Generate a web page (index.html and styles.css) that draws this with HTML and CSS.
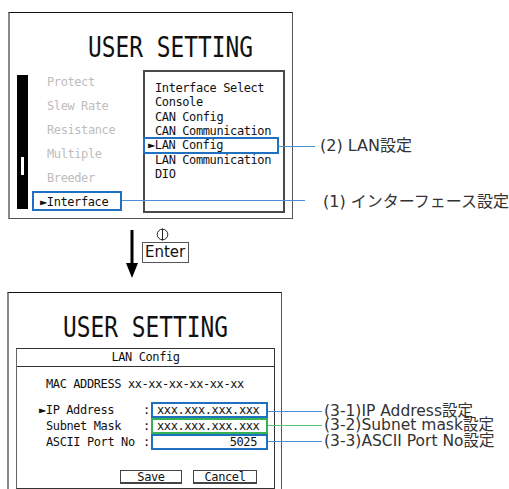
FILE: index.html
```html
<!DOCTYPE html>
<html lang="ja">
<head>
    <meta charset="UTF-8">
    <meta name="viewport" content="width=device-width, initial-scale=1.0">
    <title>USER SETTING - LAN Config</title>
    <link rel="stylesheet" href="styles.css">
</head>
<body>
    <div class="figure">
        <section class="row row-top">
            <div class="screen screen-top">
                <h1 class="title"><span>USER SETTING</span></h1>
                <div class="screen-body">
                    <div class="scrollbar"><div class="thumb"></div></div>
                    <ul class="menu">
                        <li>Protect</li>
                        <li>Slew Rate</li>
                        <li>Resistance</li>
                        <li>Multiple</li>
                        <li>Breeder</li>
                        <li class="active">►Interface</li>
                    </ul>
                    <ul class="submenu">
                        <li>Interface Select</li>
                        <li>Console</li>
                        <li>CAN Config</li>
                        <li>CAN Communication</li>
                        <li class="active">►LAN Config</li>
                        <li>LAN Communication</li>
                        <li>DIO</li>
                    </ul>
                </div>
            </div>
            <div class="callout callout-lan"><i class="lead"></i><span>(2) LAN設定</span></div>
            <div class="callout callout-if"><i class="lead"></i><span>(1) インターフェース設定</span></div>
        </section>

        <div class="enter">
            <svg class="arrow" width="12" height="48" viewBox="0 0 12 48">
                <rect x="4.5" y="0" width="3" height="34" fill="#000"/>
                <polygon points="0,33 12,33 6,48" fill="#000"/>
            </svg>
            <div class="key">
                <div class="key-mark">
                    <svg width="13" height="13" viewBox="0 0 13 13">
                        <circle cx="6.5" cy="6.5" r="5.3" fill="none" stroke="#222" stroke-width="1"/>
                        <line x1="6.5" y1="0.5" x2="6.5" y2="12.5" stroke="#222" stroke-width="1"/>
                    </svg>
                </div>
                <div class="key-box">Enter</div>
            </div>
        </div>

        <section class="row row-bottom">
            <div class="screen screen-bottom">
                <h1 class="title"><span>USER SETTING</span></h1>
                <div class="dialog">
                    <div class="dialog-head">LAN Config</div>
                    <p class="mac">MAC ADDRESS xx-xx-xx-xx-xx-xx</p>
                    <div class="fields">
                        <div class="field-row">
                            <span class="label active">►IP Address</span>
                            <span class="colon">:</span>
                            <span class="field blue">xxx.xxx.xxx.xxx</span>
                        </div>
                        <div class="field-row">
                            <span class="label">Subnet Mask</span>
                            <span class="colon">:</span>
                            <span class="field green">xxx.xxx.xxx.xxx</span>
                        </div>
                        <div class="field-row">
                            <span class="label">ASCII Port No</span>
                            <span class="colon">:</span>
                            <span class="field blue num">5025</span>
                        </div>
                    </div>
                    <div class="buttons">
                        <span class="btn btn-save">Save</span>
                        <span class="btn btn-cancel">Cancel</span>
                    </div>
                </div>
            </div>
            <div class="callout callout-sm callout-ip"><i class="lead"></i><span>(3-1)IP Address設定</span></div>
            <div class="callout callout-sm callout-mask"><i class="lead green-lead"></i><span>(3-2)Subnet mask設定</span></div>
            <div class="callout callout-sm callout-port"><i class="lead"></i><span>(3-3)ASCII Port No設定</span></div>
        </section>
    </div>
</body>
</html>
```

FILE: styles.css
```css
html, body{
    margin: 0;
    overflow: hidden;
    background: #fff;
}
body{
    font-family: "DejaVu Sans", "Noto Sans CJK JP", sans-serif;
    color: #222;
}
.figure{
    padding: 12px 0 0 8px;
}
.row{
    position: relative;
    width: 501px;
}

/* LCD screens */
.screen{
    box-sizing: border-box;
    border: 1px solid #555;
    border-top-color: #111;
    border-left: 2px solid #888;
    font: 12px "DejaVu Sans Mono", monospace;
    letter-spacing: -0.4px;
}
.screen ul{
    list-style: none;
    margin: 0;
}
.screen-top{
    width: 285px;
    height: 207px;
}
.title{
    margin: 0;
    box-sizing: border-box;
    height: 57px;
    padding: 21px 0 0 78px;
    font: normal 27.5px/1 "DejaVu Sans Mono", monospace;
    letter-spacing: 0;
    color: #111;
    white-space: nowrap;
}
.title span{
    display: inline-block;
    transform: scaleX(0.83);
    transform-origin: left center;
}
.screen-body{
    display: flex;
    align-items: flex-start;
}
.scrollbar{
    box-sizing: border-box;
    width: 11px;
    height: 134px;
    margin: 5px 0 0 7px;
    padding: 82px 0 0 4px;
    background: #000;
}
.thumb{
    width: 3px;
    height: 18px;
    background: #fff;
}
.menu{
    width: 90px;
    margin-left: 4px !important;
    padding: 0;
    line-height: 24px;
    color: #bdbdbd;
}
.menu li{
    padding-left: 15px;
    white-space: nowrap;
}
.menu .active{
    box-sizing: border-box;
    height: 20px;
    margin-top: 1px;
    padding: 2px 0 0 8px;
    line-height: 18px;
    color: #111;
    outline: 2px solid #1f70c1;
    outline-offset: -2px;
}
.submenu{
    box-sizing: border-box;
    width: 142px;
    height: 143px;
    margin-left: 21px !important;
    padding: 9px 0 0 10px;
    border: 2px solid #4a4a4a;
    line-height: 14.35px;
    color: #111;
}
.submenu li{
    white-space: nowrap;
}
.submenu .active{
    width: 134px;
    margin-left: -11px;
    padding-left: 4px;
    box-sizing: border-box;
    outline: 2px solid #1f70c1;
    outline-offset: -1px;
}

/* callouts */
.callout{
    position: absolute;
    display: flex;
    align-items: center;
    height: 20px;
    font-size: 16px;
    line-height: 20px;
    color: #333;
    white-space: nowrap;
}
.lead{
    display: block;
    height: 1px;
    background: #4a8fd3;
}
.green-lead{
    background: #5cc47a;
}
.callout-lan{ left: 270px; top: 124px; }
.callout-lan .lead{ width: 37px; }
.callout-lan span{ margin-left: 5px; }
.callout-if{ left: 114px; top: 178px; }
.callout-if .lead{ width: 183px; }
.callout-if span{ margin: 4px 0 0 18px; }

/* enter key */
.enter{
    box-sizing: border-box;
    height: 73px;
    padding: 10px 0 0 118px;
    display: flex;
    align-items: flex-start;
    gap: 4px;
}
.arrow{
    margin-top: 1px;
}
.key{
    width: 47px;
}
.key-mark{
    height: 13px;
    padding-left: 14px;
    margin-top: -1px;
}
.key-mark svg{
    display: block;
}
.key-box{
    margin-top: 1px;
    height: 21px;
    box-sizing: border-box;
    padding: 0 2px;
    border: 1px solid #555;
    font-size: 15px;
    line-height: 19px;
    color: #111;
}

/* bottom screen */
.row-bottom{
    margin-left: -1px;
}
.screen-bottom{
    width: 275px;
    padding-bottom: 12px;
}
.screen-bottom .title{
    height: 55px;
    padding-left: 54px;
}
.dialog{
    box-sizing: border-box;
    width: 259px;
    margin-left: 7px;
    padding-bottom: 4px;
    border: 1px solid #333;
    border-left-color: #666;
    color: #111;
}
.dialog-head{
    height: 17px;
    line-height: 17px;
    text-align: center;
    border-bottom: 1px solid #333;
}
.mac{
    margin: 0;
    padding: 8px 0 0 29px;
    line-height: 18px;
}
.fields{
    margin-top: 9px;
}
.field-row{
    display: flex;
    align-items: center;
    height: 16px;
}
.label{
    box-sizing: border-box;
    width: 126px;
    padding-left: 29px;
    white-space: nowrap;
}
.label.active{
    padding-left: 22px;
}
.colon{
    width: 8px;
}
.field{
    box-sizing: border-box;
    width: 117px;
    height: 16px;
    padding: 0 9px 0 4px;
    line-height: 13px;
    border: 2px solid #1f70c1;
    white-space: nowrap;
}
.field.green{
    border-color: #35b353;
}
.field.num{
    text-align: right;
}
.buttons{
    display: flex;
    gap: 11px;
    margin: 20px 0 0 103px;
}
.btn{
    box-sizing: border-box;
    height: 14px;
    border: 1px solid #444;
    border-bottom-width: 2px;
    line-height: 12px;
    text-align: center;
}
.btn-save{ width: 62px; }
.btn-cancel{ width: 64px; }

.callout-sm{
    height: 14px;
    font-size: 15.5px;
    line-height: 14px;
}
.callout-ip{ left: 261px; top: 112px; }
.callout-mask{ left: 261px; top: 126px; }
.callout-port{ left: 261px; top: 142px; }
.callout-sm .lead{ width: 54px; }
.callout-sm span{ margin-left: 2px; }
```
